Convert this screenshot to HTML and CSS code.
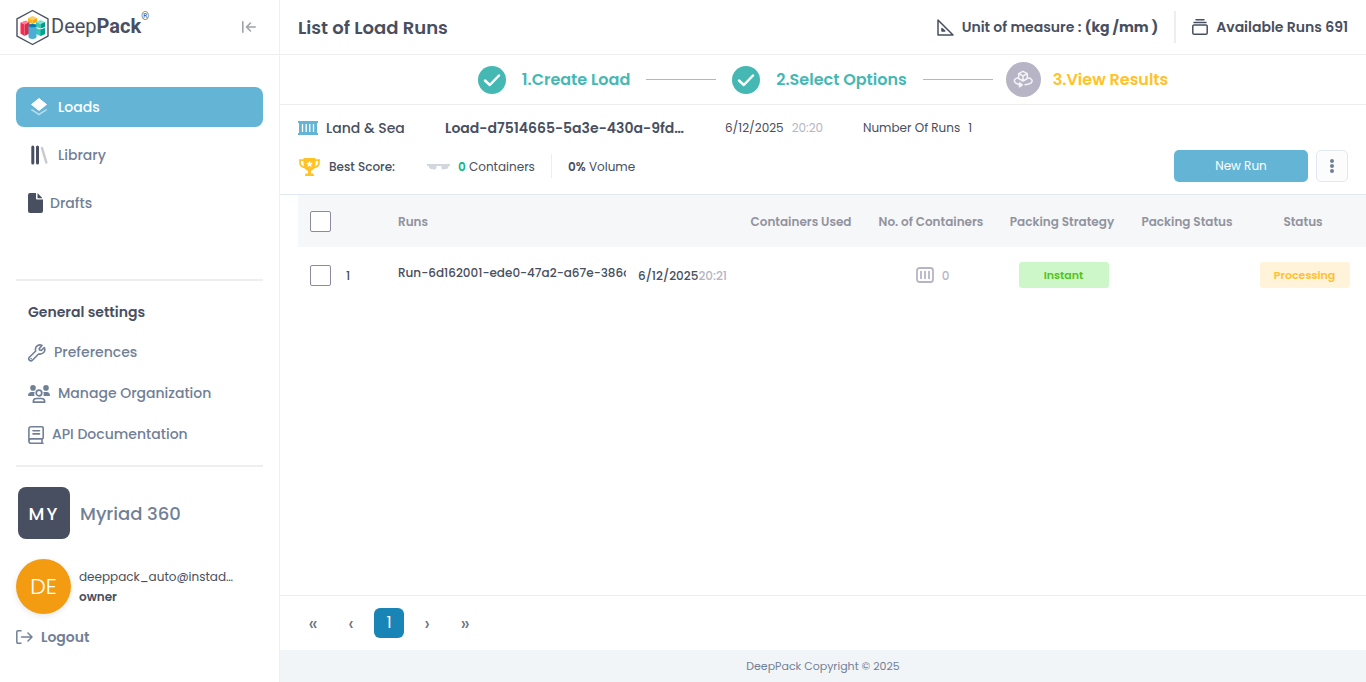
FILE: index.html
```html
<!DOCTYPE html>
<html lang="en">
<head>
<meta charset="utf-8">
<meta name="viewport" content="width=device-width, initial-scale=1">
<title>DeepPack - List of Load Runs</title>
<link rel="stylesheet" href="styles.css">
</head>
<body>
<div class="app">
  <aside class="sidebar">
    <div class="brand">
      <a class="logo" href="#">
        <svg width="34" height="37" viewBox="0 0 34 37" aria-hidden="true">
          <path d="M16.500 1.500 32 9.800V27.200L16.500 35.500 1 27.200V9.800Z" fill="#fff" stroke="#484f60" stroke-width="1.400" stroke-linejoin="round"/>
          <path d="M12 9 16.500 7l4.500 2-4.500 2Z" fill="#fbce70"/><path d="M12 9 16.500 11v4L12 13Z" fill="#fab70f"/><path d="M21 9 16.500 11v4l4.500-2Z" fill="#ffa800"/>
          <path d="m4.500 13.500 5-2 4 1.500-5 2.500Z" fill="#ff8098"/><path d="m4.500 13.500 4 2V27l-4-2.500Z" fill="#f92a51"/><path d="M8.500 15.500 13.500 13v11.500L8.500 27Z" fill="#d92b4c"/>
          <path d="m20 13 4.500-2 4.500 2-4.500 2Z" fill="#80e3d2"/><path d="m20 13 4.500 2v4.500L20 18Z" fill="#38c9b4"/><path d="m24.500 15 4.500-2v5l-4.500 1.500Z" fill="#009c8a"/>
          <path d="m20 19 4.500 1.500L29 19v6l-4.500 2L20 25Z" fill="#38c9b4"/><path d="M24.500 20.500 29 19v6l-4.500 2Z" fill="#00a38f"/>
          <path d="M12.500 16.500V28c0 2.600 8 2.600 8 0V16.500Z" fill="#4badd6"/><ellipse cx="16.500" cy="16.500" rx="4" ry="1.800" fill="#087eb0"/>
        </svg>
        <span class="wordmark">Deep<b>Pack</b></span><sup>®</sup>
      </a>
      <button class="collapse" aria-label="Collapse menu">
        <svg width="14" height="12" viewBox="0 0 14 12" fill="none" stroke="#a0a2ab" stroke-width="1.600" stroke-linecap="round" stroke-linejoin="round"><path d="M.8.8v10.400M13.200 6H5M8.500 2 4.500 6l4 4"/></svg>
      </button>
    </div>
    <nav class="nav">
      <a class="nav-item active" href="#">
        <svg width="18" height="20" viewBox="0 0 18 20"><path d="m2 12 7 4.500 7-4.500 1.300 1L9 18.500.7 13Z" fill="#b8dcec"/><path d="M9 1.500 16.500 7.500 9 13.500 1.500 7.500Z" fill="#fff" stroke="#fff" stroke-linejoin="round"/></svg>
        Loads
      </a>
      <a class="nav-item" href="#">
        <svg width="18" height="20" viewBox="0 0 18 20" fill="none" stroke-width="3" stroke-linecap="round"><path d="M2.800 2v16M7.500 2v16" stroke="#484f60"/><path d="m12 3 4.300 14.500" stroke="#c8cacf" stroke-width="2.500"/></svg>
        Library
      </a>
      <a class="nav-item drafts" href="#">
        <svg width="15" height="20" viewBox="0 0 15 20" fill="#484f60"><path d="M2 0h6v5.500a1 1 0 0 0 1 1h6V18a2 2 0 0 1-2 2H2a2 2 0 0 1-2-2V2a2 2 0 0 1 2-2Z"/><path d="M9.500 0 14.500 5.300h-5Z"/></svg>
        Drafts
      </a>
    </nav>
    <section class="settings">
      <h2>General settings</h2>
      <a href="#">
        <svg width="18" height="18" viewBox="0 0 18 18" fill="none" stroke="#718096" stroke-width="1.600" stroke-linejoin="round"><path d="M16.300 3.600 13.300 6.400 11.500 5.900 11.200 4.600 14 1.400C11.200-.1 7.500 1.900 7.400 5.200c0 .7.100 1.200.3 1.800l-6.300 6.200a2 2 0 0 0 0 3 2.100 2.100 0 0 0 3 0l6.200-6.200c4 .8 7.600-2.500 5.700-6.400Z"/><path d="M3 14.700h.2" stroke-linecap="round"/></svg>
        Preferences
      </a>
      <a href="#">
        <svg width="22" height="18" viewBox="0 0 22 18" fill="#718096"><circle cx="5" cy="2.900" r="2.800"/><circle cx="18" cy="2.900" r="2.800"/><path d="M0 11C0 8 1.500 7 3.500 7h3.300c-.8 1.500-.7 2.700-.2 4ZM22 11C22 8 20.500 7 19 7h-3.800c.8 1.500.7 2.700.2 4Z"/><circle cx="11" cy="8" r="2.800" fill="none" stroke="#718096" stroke-width="1.700"/><path d="M5.300 17.100c0-2.500 1.400-3.600 3.300-3.600h4.800c1.900 0 3.300 1.100 3.300 3.600Z" fill="none" stroke="#718096" stroke-width="1.700" stroke-linejoin="round"/></svg>
        Manage Organization
      </a>
      <a href="#">
        <svg width="16" height="18" viewBox="0 0 16 18" fill="none" stroke="#718096" stroke-width="1.600" stroke-linejoin="round" stroke-linecap="round"><path d="M15 17.200H3.200a2.300 2.300 0 0 1-2.300-2.300V3A2.200 2.200 0 0 1 3.100.8H14a1.200 1.200 0 0 1 1.200 1.200v9.700a1.200 1.200 0 0 1-1.200 1.200H3.100a2.200 2.200 0 0 0-2.200 2M14 13v4M5 4.700h6.500M5 7.900h6.500"/></svg>
        API Documentation
      </a>
    </section>
    <section class="account">
      <div class="org"><span class="org-badge">MY</span><span>Myriad 360</span></div>
      <div class="user">
        <span class="avatar">DE</span>
        <div class="user-text"><span>deeppack_auto@instad…</span><strong>owner</strong></div>
      </div>
      <button class="logout">
        <svg width="17" height="14" viewBox="0 0 17 14" fill="none" stroke="#718096" stroke-width="1.500" stroke-linecap="round" stroke-linejoin="round"><path d="M5 .8H2A1.200 1.200 0 0 0 .8 2v10A1.200 1.200 0 0 0 2 13.200h3M5.500 7H16M12 3l4 4-4 4"/></svg>
        Logout
      </button>
    </section>
  </aside>

  <main class="main">
    <header class="topbar">
      <h1>List of Load Runs</h1>
      <div class="unit">
        <svg width="17" height="17" viewBox="0 0 17 17" fill="none" stroke="#484f60" stroke-width="1.500" stroke-linejoin="round"><path d="M1 1v15h15Z"/><path d="M5 9.500V12h2.800Z"/></svg>
        <span>Unit of measure : <b>(kg /mm )</b></span>
      </div>
      <div class="available">
        <svg width="16" height="16" viewBox="0 0 16 16" fill="none" stroke="#484f60" stroke-width="1.500" stroke-linecap="round"><rect x=".8" y="6" width="14.400" height="9.200" rx="1.300"/><path d="M2 3.400h12M4 .8h8"/></svg>
        Available Runs 691
      </div>
    </header>

    <div class="steps">
      <div class="step">
        <svg width="28" height="28" viewBox="0 0 28 28"><circle cx="14" cy="14" r="14" fill="#46b8b4"/><path d="m7 14.500 4.800 4.500L21 9.500" fill="none" stroke="#fff" stroke-width="2.500" stroke-linecap="round" stroke-linejoin="round"/></svg>
        <span>1.Create Load</span>
      </div>
      <span class="step-line"></span>
      <div class="step">
        <svg width="28" height="28" viewBox="0 0 28 28"><circle cx="14" cy="14" r="14" fill="#46b8b4"/><path d="m7 14.500 4.800 4.500L21 9.500" fill="none" stroke="#fff" stroke-width="2.500" stroke-linecap="round" stroke-linejoin="round"/></svg>
        <span>2.Select Options</span>
      </div>
      <span class="step-line last"></span>
      <div class="step current">
        <svg width="35" height="35" viewBox="0 0 35 35" fill="none" stroke="#f4f3f7" stroke-width="1.500" stroke-linejoin="round" stroke-linecap="round"><circle cx="17.500" cy="17.500" r="17.500" fill="#b7b5c5" stroke="none"/><path d="m17 9.300 4.300 2.300v4.900L17 19l-4.300-2.500v-4.900ZM12.700 11.700 17 14l4.300-2.300M17 14v5"/><path d="M12.300 15.800C9 16.300 8 18 8.500 19.500c.5 1.600 2.500 2.600 5.500 3M21.700 15.800c3.300.5 4.800 2.200 4.300 3.700-.6 1.900-3.300 2.900-7 3.200"/><path d="m13.500 20.800 2.800 2-2.800 2Z" fill="#f4f3f7"/></svg>
        <span>3.View Results</span>
      </div>
    </div>

    <section class="summary">
      <div class="load-info">
        <div class="mode">
          <svg width="20" height="14" viewBox="0 0 20 14"><path d="M0 0h20v2h-1v10h1v2H0v-2h1V2H0Z" fill="#64b4d6"/><path d="M4.500 3v8M8.200 3v8M11.800 3v8M15.500 3v8" stroke="#fff" stroke-width="1.300"/></svg>
          Land &amp; Sea
        </div>
        <strong class="load-name">Load-d7514665-5a3e-430a-9fd…</strong>
        <div class="load-date">6/12/2025 <span class="time">20:20</span></div>
        <div class="run-count">Number Of Runs <span>1</span></div>
      </div>
      <div class="score-row">
        <div class="best">
          <svg width="23" height="18" viewBox="0 0 23 18"><path d="M6 2.200H2V4.500c0 3 2.500 4.700 5.500 5.200M17 2.200h4V4.500c0 3-2.500 4.700-5.500 5.200" fill="none" stroke="#ffc227" stroke-width="1.700"/><path d="M5.500 0h12v6c0 3.800-1.800 6.200-4.500 7v2.500h2.500L16 18H7l.5-2.500H10V13c-2.700-.8-4.500-3.200-4.500-7Z" fill="#ffc227"/><path d="m11.500 2.700 1 2.100 2.200.3-1.600 1.600.4 2.200-2-1.100-2 1.100.4-2.200-1.600-1.600 2.200-.3Z" fill="#fff"/></svg>
          Best Score:
        </div>
        <div class="used">
          <svg width="23" height="6" viewBox="0 0 23 6"><path d="M0 0h23v2h-1.500a2.500 2.500 0 0 1-3.500 2.700 2 2 0 0 1-3.200-2.700H9a2.200 2.200 0 0 1-3.500 2.700A2.500 2.500 0 0 1 2 2H0Z" fill="#d2d6df"/></svg>
          <span><b>0</b> Containers</span>
        </div>
        <div class="volume"><b>0%</b> Volume</div>
        <button class="new-run">New Run</button>
        <button class="more" aria-label="More actions">
          <svg width="4" height="14" viewBox="0 0 4 14" fill="#718096"><circle cx="2" cy="2" r="2"/><circle cx="2" cy="7" r="2"/><circle cx="2" cy="12" r="2"/></svg>
        </button>
      </div>
    </section>

    <div class="table-area">
      <table class="runs">
        <colgroup><col class="c-check"><col class="c-index"><col class="c-run"><col class="c-used"><col class="c-number"><col class="c-strategy"><col class="c-packing"><col class="c-status"></colgroup>
        <thead>
          <tr>
            <th class="check"><input type="checkbox" aria-label="Select all runs"></th>
            <th></th>
            <th class="left">Runs</th>
            <th>Containers Used</th>
            <th>No. of Containers</th>
            <th>Packing Strategy</th>
            <th>Packing Status</th>
            <th class="end">Status</th>
          </tr>
        </thead>
        <tbody>
          <tr>
            <td class="check"><input type="checkbox" aria-label="Select run 1"></td>
            <td class="left">1</td>
            <td class="left"><div class="run"><span class="run-name">Run-6d162001-ede0-47a2-a67e-386c</span><span>6/12/2025<span class="time">20:21</span></span></div></td>
            <td></td>
            <td><div class="number"><svg width="18" height="16" viewBox="0 0 18 16" fill="none" stroke="#b7b5c5"><rect x="1" y="1" width="16" height="14" rx="2.500" stroke-width="1.800"/><path d="M5 4v8M9 4v8M13 4v8" stroke-width="1.800"/></svg><span>0</span></div></td>
            <td><span class="tag instant">Instant</span></td>
            <td></td>
            <td class="end"><span class="tag processing">Processing</span></td>
          </tr>
        </tbody>
      </table>
    </div>

    <nav class="pager" aria-label="Pages">
      <button aria-label="First page">«</button>
      <button aria-label="Previous page">‹</button>
      <button class="on">1</button>
      <button aria-label="Next page">›</button>
      <button aria-label="Last page">»</button>
    </nav>
    <footer class="footer">DeepPack Copyright © 2025</footer>
  </main>
</div>
</body>
</html>
```

FILE: styles.css
```css
* { box-sizing: border-box; }
body {
  margin: 0;
  font-family: Poppins, Inter, "Open Sans", sans-serif;
  font-size: 12px;
  color: #484f60;
  background: #fff;
}
h1, h2 { margin: 0; }
a { color: inherit; text-decoration: none; }
button { font: inherit; color: inherit; padding: 0; border: 0; background: none; cursor: pointer; }
svg { display: block; flex: none; }
.app { display: grid; grid-template-columns: 280px minmax(0, 1fr); min-height: 100vh; }

.sidebar { border-right: 1px solid #f0f0f2; }
.brand { display: flex; align-items: center; justify-content: space-between; height: 55px; padding: 0 23px 0 16px; border-bottom: 1px solid #eeeeef; }
.logo { display: flex; align-items: center; font-family: Roboto, sans-serif; }
.wordmark { padding: 0 0 2px 1px; font-size: 20px; line-height: 24px; }
.logo sup { align-self: flex-start; margin-top: 2px; font-size: 10px; line-height: 12px; }
.nav { display: flex; flex-direction: column; gap: 8px; height: 224px; margin: 0 16px; padding-top: 32px; }
.nav-item { display: flex; align-items: center; gap: 10px; height: 40px; padding-left: 14px; border-radius: 8px; font-size: 14px; font-weight: 500; color: #718096; }
.nav-item.active { color: #fff; background: #64b4d6; }
.nav-item.drafts { gap: 7px; padding-left: 12px; }
.settings { margin: 0 16px; padding: 15px 12px 10px; border-top: 2px solid #eeeeef; border-bottom: 2px solid #eeeeef; font-size: 14px; }
.settings h2 { font-size: 14px; font-weight: 600; line-height: 32px; margin-bottom: 4px; }
.settings a { display: flex; align-items: center; gap: 8px; height: 41px; font-weight: 500; color: #718096; }
.account { padding: 20px 16px 0; }
.org { display: flex; align-items: center; gap: 10px; padding-left: 2px; font-size: 18px; font-weight: 500; color: #718096; }
.org-badge { display: grid; place-items: center; width: 52px; height: 52px; border-radius: 8px; background: #484f60; color: #fff; letter-spacing: 2px; }
.user { display: flex; align-items: center; gap: 8px; margin-top: 20px; }
.avatar { display: grid; place-items: center; width: 55px; height: 55px; border-radius: 50%; background: #f39c12; color: #fff; font-size: 22px; font-weight: 300; box-shadow: 0 2px 6px #00000018; }
.user-text { display: flex; flex-direction: column; line-height: 20px; }
.user-text strong { font-weight: 600; }
.logout { display: flex; align-items: center; gap: 8px; margin-top: 12px; font-size: 14px; line-height: 22px; font-weight: 600; color: #718096; }

.main { display: flex; flex-direction: column; min-width: 0; }
.topbar { display: flex; align-items: center; height: 55px; padding: 0 18px; border-bottom: 1px solid #eeeeef; font-size: 14px; font-weight: 600; }
.topbar h1 { margin-right: auto; font-size: 18px; font-weight: 600; }
.topbar b { font-weight: 700; }
.unit, .available { display: flex; align-items: center; gap: 8px; height: 32px; }
.unit { padding-right: 16px; border-right: 2px solid #eeeeef; }
.available { padding-left: 16px; }
.steps { display: flex; align-items: center; justify-content: center; gap: 16px; height: 50px; border-bottom: 1px solid #eeeeef; font-size: 16px; font-weight: 600; color: #46b8b4; }
.step { display: flex; align-items: center; gap: 16px; }
.step.current { gap: 12px; color: #ffc227; }
.step-line { width: 70px; height: 1px; background: #b7b5c5; }
.step-line.last { margin-right: -3px; }

.summary { height: 90px; padding: 12px 18px; border-bottom: 1px solid #e2e8f0; }
.load-info { display: flex; align-items: center; height: 22px; }
.mode { display: flex; align-items: center; gap: 8px; width: 147px; font-size: 14px; font-weight: 500; }
.load-name { min-width: 240px; margin-right: 40px; white-space: nowrap; font-size: 14px; font-weight: 600; }
.load-date { display: flex; gap: 8px; width: 138px; }
.run-count { display: flex; gap: 8px; }
.time { color: #b7b5c5; }
.score-row { display: flex; align-items: center; height: 32px; margin-top: 11px; }
.best { display: flex; align-items: center; gap: 8px; width: 129px; font-weight: 500; }
.used { display: flex; align-items: center; gap: 8px; width: 125px; height: 24px; border-right: 1px solid #eeeeef; }
.score-row b { font-weight: 600; }
.used b { color: #10b981; }
.best, .used, .volume { padding-top: 2px; }
.volume { margin-right: auto; padding-left: 16px; }
.new-run { width: 134px; height: 32px; border-radius: 5px; background: #64b4d6; color: #fff; }
.more { display: grid; place-items: center; width: 32px; height: 32px; margin-left: 8px; border: 1px solid #e2e8f0; border-radius: 5px; background: #fcfcfd; }

.table-area { flex: 1; padding-left: 18px; }
.runs { width: 100%; table-layout: fixed; border-collapse: collapse; }
.runs th, .runs td { padding: 0; text-align: center; font-weight: 500; }
.runs th { height: 52px; padding-top: 2px; background: #f6f7f9; color: #92939e; font-weight: 600; white-space: nowrap; }
.runs td { height: 56px; }
.runs td:nth-child(n+4) { padding-left: 3px; }
.runs .left { padding-top: 2px; text-align: left; }
.runs .check { padding: 0 0 0 12px; text-align: left; }
.runs .end { padding-right: 8px; }
.c-check { width: 48px; }
.c-index { width: 52px; }
.c-used { width: 126px; }
.c-number { width: 134px; }
.c-strategy { width: 128px; }
.c-packing { width: 122px; }
.c-status { width: 118px; }
.check input { appearance: none; display: block; width: 21px; height: 21px; margin: 0; border: 1px solid #8d8a9f; border-radius: 2px; background: #fff; }
.run { display: flex; align-items: center; gap: 12px; }
.run-name { width: 228px; overflow: hidden; white-space: nowrap; padding-bottom: 6px; }
.number { display: flex; align-items: center; justify-content: center; gap: 8px; color: #b7b5c5; }
.number span { padding-top: 2px; }
.tag { display: inline-block; width: 90px; border-radius: 3px; font-size: 11px; line-height: 26px; font-weight: 600; }
.instant { background: #cdf7c8; color: #52c41a; }
.processing { background: #fff3d9; color: #ffc02e; }

.pager { display: flex; align-items: center; gap: 8px; height: 55px; padding: 0 18px; border-top: 1px solid #eeeeef; font-size: 20px; line-height: 30px; color: #6c737f; }
.pager button { width: 30px; height: 30px; border-radius: 6px; }
.pager .on { background: #1985b7; color: #fff; font-size: 16px; }
.footer { background: #f1f5f8; text-align: center; font-size: 11px; line-height: 32px; color: #718096; }
```
